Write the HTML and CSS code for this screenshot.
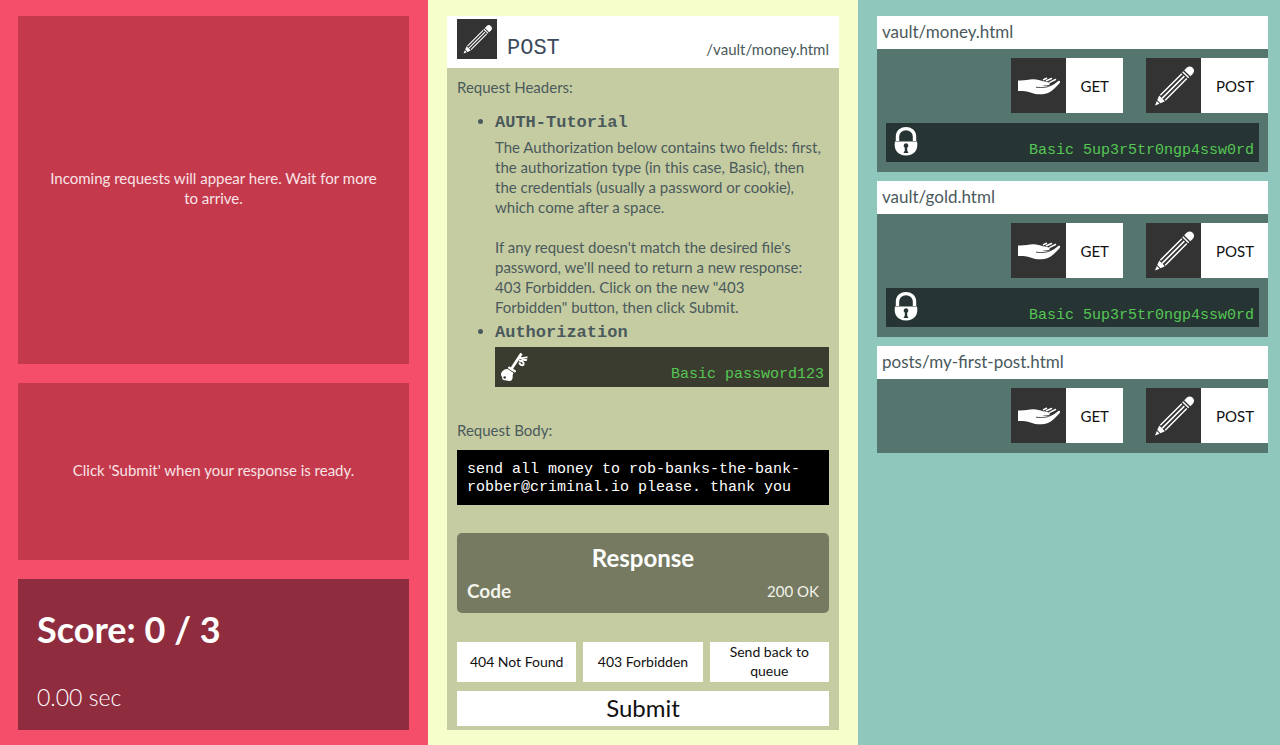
FILE: index.html
```html
<!DOCTYPE html>
<html lang="en">
<head>
<meta charset="utf-8">
<meta name="viewport" content="width=device-width, initial-scale=1">
<title>Requests</title>
<link rel="stylesheet" href="styles.css">
</head>
<body>
<svg class="sprite" aria-hidden="true">
  <symbol id="pencil" viewBox="0 0 55 55">
    <g transform="translate(9 47.500) rotate(-45)">
      <path d="M0 0 L4.500 -1.900 V1.900 Z" fill="#fff"/>
      <path d="M5.500 -2.300 L10 -4 V4 L5.500 2.300 Z" fill="#fff"/>
      <path d="M11 -4.200 H41.500 V-2.700 H11 Z M10 -.8 H41.500 V.8 H10 Z M11 2.700 H41.500 V4.200 H11 Z" fill="#fff"/>
      <path d="M42.700 -4.300 H44.200 V4.300 H42.700 Z M45.600 -4.300 H49 Q53.300 -4 53.300 0 T49 4.300 H45.600 Z" fill="#fff"/>
    </g>
  </symbol>
  <symbol id="hand" viewBox="0 0 55 55">
    <path d="M7 22.500 C13 23 17 21.500 22 21.300 C26 21.200 29 22.500 32 23.300 C35 23.800 37 24 38.500 25 C39.300 26 38.500 27 37 27.200 L31 27.700 C36 28.600 40 28 43 26.300 L47.300 22.900 C49 22.400 49.600 23.600 48.700 24.900 C45 29 41.500 33 37 35 C32 37 25 36.800 19.500 34.500 C15 32.800 11 33 7 33 Z" fill="#fff"/>
    <path d="M32.500 21.700 L35.500 20.300 M35.500 22.700 L40.500 20.500 M38.800 24.300 L44.500 21.500" stroke="#fff" stroke-width="1.500" stroke-linecap="round" fill="none"/>
    <path d="M25 29.200 C31 29.900 37 29.600 41 26.600 M40.500 26.800 L45 24" stroke="#333" stroke-width=".9" fill="none"/>
  </symbol>
  <symbol id="lock" viewBox="0 0 40 40">
    <path d="M11.500 19 V14.500 C11.500 4 28.500 4 28.500 14.500 V19" fill="none" stroke="#fff" stroke-width="3.400"/>
    <path d="M9 19.500 H31 C32.500 27 29 33.500 20 33.500 C11 33.500 7.500 27 9 19.500 Z" fill="#fff"/>
    <path d="M20 21.200 A2.500 2.500 0 0 1 21.200 25.800 V28.500 L22.500 31 H17.500 L18.800 28.500 V25.800 A2.500 2.500 0 0 1 20 21.200 Z" fill="#263533"/>
  </symbol>
  <symbol id="key" viewBox="0 0 40 40">
    <path d="M16 22.500 L26.500 6.500" stroke="#fff" stroke-width="2.800" fill="none"/>
    <path d="M14.200 20.700 L19.800 24.200" stroke="#fff" stroke-width="2.400" stroke-linecap="round"/>
    <path d="M12.500 22 C9 21.600 6 25 6 27.500 C6 29 7.200 29.500 7.200 31 C7.500 34 11 33.400 13 33.800 C17 35 18 31.500 17.600 29 C17.500 27.500 18.800 27 18 25.500 Z" fill="#fff"/>
    <path d="M24.500 10.500 C27 12.500 28 10 32.500 10.400 M27 12 C28.500 14 30 12.500 32 13.200 M24 13.500 C27 14 29.500 15 28.500 17.800 C26.500 19 24.500 17 24.300 15.500" stroke="#fff" stroke-width="1.900" fill="none"/>
    <circle cx="9.700" cy="30.500" r="1.300" fill="#3b3c30"/>
  </symbol>
</svg>

<main class="board">
  <section class="column column-queue">
    <div class="notice"><p>Incoming requests will appear here. Wait for more to arrive.</p></div>
    <div class="notice"><p>Click 'Submit' when your response is ready.</p></div>
    <div class="score">
      <h1 class="score-title">Score: 0 / 3</h1>
      <p class="timer">0.00 sec</p>
    </div>
  </section>

  <section class="column column-request">
    <article class="request">
      <header class="request-head">
        <svg class="head-icon" aria-hidden="true"><use href="#pencil"/></svg>
        <span class="method">POST</span>
        <span class="path">/vault/money.html</span>
      </header>
      <div class="request-main">
        <p class="label">Request Headers:</p>
        <ul class="headers">
          <li>
            <h2 class="header-name">AUTH-Tutorial</h2>
            <p>The Authorization below contains two fields: first, the authorization type (in this case, Basic), then the credentials (usually a password or cookie), which come after a space.</p>
            <p class="second">If any request doesn't match the desired file's password, we'll need to return a new response: 403 Forbidden. Click on the new "403 Forbidden" button, then click Submit.</p>
          </li>
          <li>
            <h2 class="header-name">Authorization</h2>
            <div class="credential credential-key">
              <svg class="credential-icon" aria-hidden="true"><use href="#key"/></svg>
              <code>Basic password123</code>
            </div>
          </li>
        </ul>
        <p class="label">Request Body:</p>
        <pre class="payload">send all money to rob-banks-the-bank-robber@criminal.io please. thank you</pre>
        <section class="response">
          <h2 class="response-title">Response</h2>
          <div class="response-row"><h3 class="response-key">Code</h3><span>200 OK</span></div>
        </section>
        <div class="actions">
          <button class="action" type="button">404 Not Found</button>
          <button class="action" type="button">403 Forbidden</button>
          <button class="action" type="button">Send back to queue</button>
        </div>
        <button class="submit" type="button">Submit</button>
      </div>
    </article>
  </section>

  <section class="column column-files">
    <article class="file">
      <h2 class="file-name">vault/money.html</h2>
      <div class="methods">
        <button class="verb" type="button"><svg class="verb-icon" aria-hidden="true"><use href="#hand"/></svg><span class="verb-text">GET</span></button>
        <button class="verb" type="button"><svg class="verb-icon" aria-hidden="true"><use href="#pencil"/></svg><span class="verb-text">POST</span></button>
      </div>
      <div class="credential credential-lock">
        <svg class="credential-icon" aria-hidden="true"><use href="#lock"/></svg>
        <code>Basic 5up3r5tr0ngp4ssw0rd</code>
      </div>
    </article>
    <article class="file">
      <h2 class="file-name">vault/gold.html</h2>
      <div class="methods">
        <button class="verb" type="button"><svg class="verb-icon" aria-hidden="true"><use href="#hand"/></svg><span class="verb-text">GET</span></button>
        <button class="verb" type="button"><svg class="verb-icon" aria-hidden="true"><use href="#pencil"/></svg><span class="verb-text">POST</span></button>
      </div>
      <div class="credential credential-lock">
        <svg class="credential-icon" aria-hidden="true"><use href="#lock"/></svg>
        <code>Basic 5up3r5tr0ngp4ssw0rd</code>
      </div>
    </article>
    <article class="file">
      <h2 class="file-name">posts/my-first-post.html</h2>
      <div class="methods">
        <button class="verb" type="button"><svg class="verb-icon" aria-hidden="true"><use href="#hand"/></svg><span class="verb-text">GET</span></button>
        <button class="verb" type="button"><svg class="verb-icon" aria-hidden="true"><use href="#pencil"/></svg><span class="verb-text">POST</span></button>
      </div>
    </article>
  </section>
</main>
</body>
</html>
```

FILE: styles.css
```css
* { box-sizing: border-box; }

body {
  margin: 0;
  font-family: Lato, "Open Sans", sans-serif;
  font-size: 15px;
  line-height: 20px;
  color: #4a5a5c;
}

h1, h2, h3, p, ul, pre { margin: 0; }

button {
  border: 0;
  padding: 0;
  background: #fff;
  color: #111;
  font: inherit;
  cursor: pointer;
}

code, pre, .method, .header-name {
  font-family: "Liberation Mono", "Courier New", monospace;
}

.sprite { position: absolute; width: 0; height: 0; }

.board {
  display: grid;
  grid-template-columns: 428fr 430fr 422fr;
  min-height: 100vh;
}

.column { min-width: 0; padding: 16px 19px 15px; }

.column-queue {
  display: grid;
  grid-template-rows: 63fr 32fr auto;
  gap: 19px;
  padding-left: 18px;
  background: #f54e6a;
  color: #fff;
}

.notice {
  display: grid;
  place-items: center;
  padding: 0 24px 4px;
  background: #c4394c;
  color: #f9e3e6;
  text-align: center;
}

.score { padding: 28px 19px 19px; background: #8f2d3f; }
.score-title { font-size: 36px; line-height: 44px; }
.timer { margin-top: 32px; font-size: 23px; line-height: 28px; font-weight: 300; }

.column-request { display: flex; background: #f6fecb; }

.request {
  display: flex;
  flex-direction: column;
  flex: 1;
  min-width: 0;
  background: #c6cca2;
}

.request-head {
  display: flex;
  align-items: flex-end;
  gap: 10px;
  padding: 3px 10px 9px;
  background: #fff;
}

.head-icon { width: 40px; height: 40px; background: #333; }
.method { font-size: 22px; line-height: 20px; color: #3d4a5c; }
.path { margin-left: auto; }

.request-main {
  display: flex;
  flex-direction: column;
  flex: 1;
  padding: 9px 10px 4px;
}

.headers { margin: 14px 0 33px; padding-left: 38px; }
.headers li + li { margin-top: 4px; }
.header-name { margin-bottom: 3px; font-size: 17px; line-height: 22px; }
.second { margin-top: 20px; padding-right: 12px; }

.credential {
  display: flex;
  align-items: flex-end;
  justify-content: space-between;
  padding-right: 5px;
  color: #55c653;
}

.credential code { font-size: 15px; line-height: 18px; padding-bottom: 3px; }
.credential-icon { width: 40px; height: 40px; }
.credential-key { background: #3b3c30; }
.credential-lock { margin: 10px 9px 0; height: 39px; background: #263533; }
.credential-lock code { padding-bottom: 2px; }

.payload {
  margin-top: 10px;
  padding: 11px 10px 8px;
  background: #000;
  color: #fff;
  font-size: 15px;
  line-height: 18px;
  white-space: pre-wrap;
}

.response {
  margin-top: 28px;
  padding: 9px 10px;
  border-radius: 5px;
  background: #757a61;
  color: #fff;
}

.response-title { font-size: 24px; line-height: 32px; text-align: center; }

.response-row {
  display: flex;
  align-items: center;
  justify-content: space-between;
  margin-top: 4px;
  line-height: 26px;
  color: #f2f3ea;
}

.response-key { font-size: 19px; }

.actions {
  display: grid;
  grid-template-columns: repeat(3, 1fr);
  gap: 7px;
  margin: auto 0 9px;
}

.action { min-height: 40px; padding: 0 10px 2px; font-size: 14px; line-height: 19px; }
.submit { padding-bottom: 2px; font-size: 24px; line-height: 33px; }

.column-files {
  display: flex;
  flex-direction: column;
  gap: 9px;
  padding-right: 12px;
  background: #8fc7bd;
}

.file { padding-bottom: 10px; background: #55766f; }

.file-name {
  padding: 6px 5px 7px;
  background: #fff;
  font-size: 17px;
  line-height: 20px;
  font-weight: 400;
}

.methods {
  display: flex;
  justify-content: flex-end;
  gap: 23px;
  padding-top: 9px;
}

.verb { display: flex; align-items: center; }
.verb-icon { width: 55px; height: 55px; background: #333; }
.verb-text { padding: 0 14px 0 15px; }
```
